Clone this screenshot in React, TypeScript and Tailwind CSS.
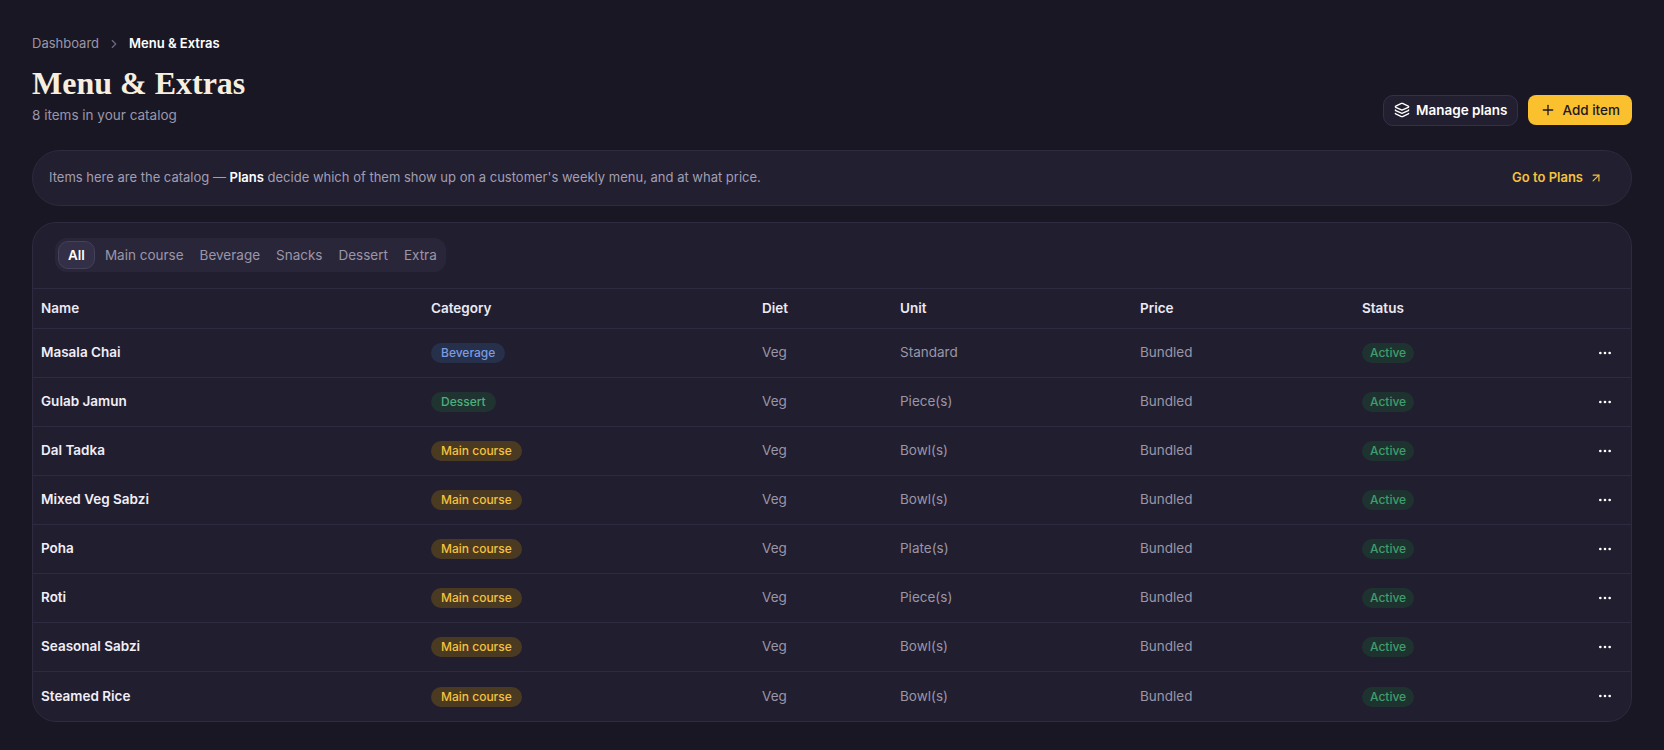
import React from 'react';
import { Layers, Plus, ArrowUpRight, ChevronRight, MoreHorizontal } from 'lucide-react';

const items = [
    { name: 'Masala Chai', cat: 'Beverage', unit: 'Standard' },
    { name: 'Gulab Jamun', cat: 'Dessert', unit: 'Piece(s)' },
    { name: 'Dal Tadka', cat: 'Main course', unit: 'Bowl(s)' },
    { name: 'Mixed Veg Sabzi', cat: 'Main course', unit: 'Bowl(s)' },
    { name: 'Poha', cat: 'Main course', unit: 'Plate(s)' },
    { name: 'Roti', cat: 'Main course', unit: 'Piece(s)' },
    { name: 'Seasonal Sabzi', cat: 'Main course', unit: 'Bowl(s)' },
    { name: 'Steamed Rice', cat: 'Main course', unit: 'Bowl(s)' },
];

const CategoryBadge = ({ cat }: { cat: string }) => {
    let cls = 'bg-[#4a3a22] text-[#f5c23e]';
    if (cat === 'Beverage') cls = 'bg-[#27304a] text-[#7c9be0]';
    if (cat === 'Dessert') cls = 'bg-[#1f3330] text-[#4fae7e]';
    return <span className={`inline-flex items-center rounded-full px-2.5 h-[20px] text-[12px] font-medium ${cls}`}>{cat}</span>;
};

const grid = 'grid grid-cols-[390px_331px_138px_240px_222px_1fr_60px] items-center';

export default function App() {
    return (
        <div className="min-h-[750px] bg-[#1a1725] px-8 pt-[34px] pb-8 text-white" style={{ fontFamily: 'Inter, "Liberation Sans", sans-serif' }}>
            {/* Breadcrumb */}
            <div className="flex items-center gap-2 text-[13px]">
                <span className="text-[#9a96a8]">Dashboard</span>
                <ChevronRight className="h-3.5 w-3.5 text-[#6d6980]" />
                <span className="font-semibold text-white">Menu &amp; Extras</span>
            </div>

            <div className="flex items-end justify-between">
                <div>
                    <h1 className="mt-[8px] text-[32px] font-bold leading-[42px] text-[#f6efe0]" style={{ fontFamily: '"Liberation Serif", serif' }}>Menu &amp; Extras</h1>
                    <p className="mt-[1px] text-[13.5px] text-[#9a96a8] leading-5">8 items in your catalog</p>
                </div>
                <div className="flex items-center gap-2.5 mb-[-1px]">
                    <button className="flex h-[31px] items-center gap-1.5 rounded-[10px] border border-[#34304a] bg-[#221f30] px-2.5 text-[13.5px] font-semibold text-white">
                        <Layers className="h-4 w-4" /> Manage plans
                    </button>
                    <button className="flex h-[30px] items-center gap-1.5 rounded-[8px] bg-[#fbc02d] px-3 text-[13.5px] font-medium text-[#1a1725]">
                        <Plus className="h-4 w-4" /> Add item
                    </button>
                </div>
            </div>

            {/* Info banner */}
            <div className="mt-[25px] flex h-[56px] items-center justify-between rounded-[28px] border border-[#2e2a3f] bg-[#221f31] pl-[16px] pr-[28px] text-[13px]">
                <p className="text-[#a29eb1]">Items here are the catalog — <span className="font-semibold text-white">Plans</span> decide which of them show up on a customer's weekly menu, and at what price.</p>
                <span className="flex items-center gap-1.5 font-semibold text-[#f5c23e]">Go to Plans <ArrowUpRight className="h-3.5 w-3.5" /></span>
            </div>

            {/* Table card */}
            <div className="mt-[16px] overflow-hidden rounded-[24px] border border-[#2e2a3f] bg-[#211e2f]">
                <div className="flex h-[65px] items-center px-[22px]">
                    <div className="flex items-center gap-1 rounded-[12px] bg-[#2a2639] p-[3px] text-[13.5px] text-[#9a96a8]">
                        <span className="rounded-[10px] border border-[#45405c] bg-[#332f46] px-[9px] py-[3px] font-semibold text-white">All</span>
                        <span className="px-[6px]">Main course</span>
                        <span className="px-[6px]">Beverage</span>
                        <span className="px-[6px]">Snacks</span>
                        <span className="px-[6px]">Dessert</span>
                        <span className="px-[6px]">Extra</span>
                    </div>
                </div>
                <div className={`${grid} h-[41px] border-t border-b border-[#2e2a3f] pl-2 text-[13.5px] font-semibold text-[#ece9f4]`}>
                    <span>Name</span><span>Category</span><span>Diet</span><span>Unit</span><span>Price</span><span>Status</span><span />
                </div>
                {items.map((it, i) => (
                    <div key={it.name} className={`${grid} h-[49px] pl-2 text-[13.5px] ${i < items.length - 1 ? 'border-b border-[#2e2a3f]' : ''}`}>
                        <span className="font-semibold text-[#f1eef7]">{it.name}</span>
                        <span><CategoryBadge cat={it.cat} /></span>
                        <span className="text-[#9a96a8]">Veg</span>
                        <span className="text-[#9a96a8]">{it.unit}</span>
                        <span className="text-[#9a96a8]">Bundled</span>
                        <span><span className="inline-flex h-[20px] items-center rounded-full bg-[#1e3330] px-2 text-[12px] font-medium text-[#3f9e6c]">Active</span></span>
                        <span className="flex justify-end pr-[18px]"><MoreHorizontal className="h-4 w-4 text-white" /></span>
                    </div>
                ))}
            </div>
        </div>
    );
}
